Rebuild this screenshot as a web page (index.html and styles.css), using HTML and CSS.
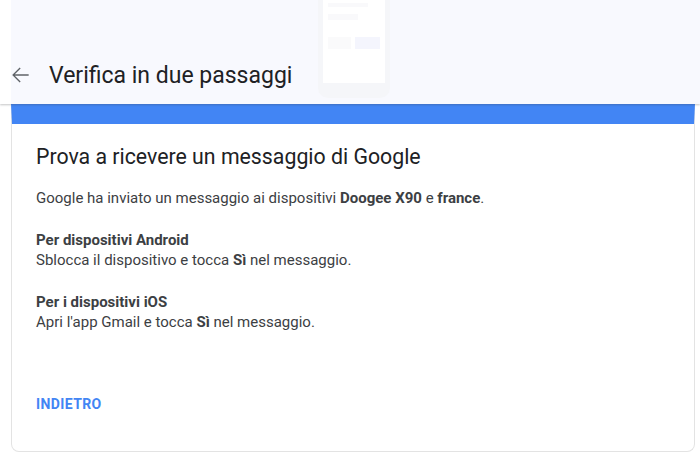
FILE: index.html
```html
<!DOCTYPE html>
<html lang="it">
<head>
    <meta charset="UTF-8">
    <meta name="viewport" content="width=device-width, initial-scale=1.0">
    <title>Verifica in due passaggi</title>
    <link rel="stylesheet" href="styles.css">
</head>
<body>

    <header class="topbar">
        <div class="topbar-inner">
            <div class="phone">
                <div class="phone-screen">
                    <span class="ph-line ph-a"></span>
                    <span class="ph-line ph-b"></span>
                    <div class="ph-buttons">
                        <span class="ph-btn"></span>
                        <span class="ph-btn ph-btn-blue"></span>
                    </div>
                </div>
            </div>
            <svg class="back" width="26" height="26" viewBox="0 0 24 24">
                <path d="M20 11.3H7.2l5.4-5.4-0.9-0.9-6.9 7 6.9 7 0.9-0.9-5.4-5.4H20z" fill="#5f6368"/>
            </svg>
            <h1 class="page-title">Verifica in due passaggi</h1>
        </div>
    </header>

    <main class="card">
        <h2 class="card-title">Prova a ricevere un messaggio di Google</h2>

        <p>Google ha inviato un messaggio ai dispositivi <b>Doogee X90</b> e <b>france</b>.</p>

        <p><b>Per dispositivi Android</b><br>
        Sblocca il dispositivo e tocca <b>Sì</b> nel messaggio.</p>

        <p><b>Per i dispositivi iOS</b><br>
        Apri l'app Gmail e tocca <b>Sì</b> nel messaggio.</p>

        <button class="back-button">INDIETRO</button>
    </main>

</body>
</html>
```

FILE: styles.css
```css
body {
    margin: 0;
    background-color: #fff;
    font-family: Roboto, "Liberation Sans", Arial, sans-serif;
    color: #3c4043;
}

.topbar {
    position: relative;
    z-index: 1;
    box-shadow: 0 1px 2px rgba(60, 64, 67, 0.3);
}

.topbar-inner {
    position: relative;
    margin-left: 11px;
    height: 104px;
    background-color: #f8f9fe;
    display: flex;
    align-items: flex-end;
    box-sizing: border-box;
    padding-bottom: 13px;
}

.back {
    flex: none;
    margin-left: -4px;
    margin-right: 16px;
    margin-bottom: 3px;
}

.page-title {
    margin: 0;
    font-size: 23px;
    font-weight: 400;
    line-height: 30px;
    color: #202124;
}

/* telefono decorativo sullo sfondo */
.phone {
    position: absolute;
    left: 307px;
    top: -12px;
    width: 72px;
    height: 110px;
    background-color: #f5f6f9;
    border-radius: 0 0 10px 10px;
}

.phone-screen {
    margin: 0 5px;
    height: 95px;
    background-color: #fff;
    padding: 15px 5px 0;
    box-sizing: border-box;
}

.ph-line {
    display: block;
    height: 4px;
    background-color: #f9f9fb;
}

.ph-a { width: 40px; margin-bottom: 7px; }
.ph-b { width: 30px; height: 6px; }

.ph-buttons {
    display: flex;
    gap: 4px;
    margin-top: 17px;
}

.ph-btn {
    width: 24px;
    height: 12px;
    background-color: #fafafb;
}

.ph-btn-blue {
    width: 27px;
    background-color: #f4f5fd;
}

.card {
    margin: 0 5px 0 11px;
    height: 348px;
    box-sizing: border-box;
    border: 1px solid #e3e3e3;
    border-top: 20px solid #4285f4;
    border-radius: 0 0 8px 8px;
    padding: 19px 24px 0;
    display: flex;
    flex-direction: column;
    align-items: flex-start;
}

.card-title {
    margin: 0 0 17px;
    font-size: 21.3px;
    font-weight: 400;
    line-height: 28px;
    color: #202124;
}

.card p {
    margin: 0 0 22px;
    font-size: 15px;
    line-height: 20px;
}

.card b {
    font-weight: 700;
    color: #3c4043;
}

.back-button {
    margin-top: 32px;
    margin-left: 0;
    padding: 8px 0;
    border: none;
    background: none;
    font-family: Roboto, "Liberation Sans", Arial, sans-serif;
    font-size: 14px;
    font-weight: 700;
    letter-spacing: 0.4px;
    color: #4285f4;
    cursor: pointer;
    line-height: 20px;
}
```
